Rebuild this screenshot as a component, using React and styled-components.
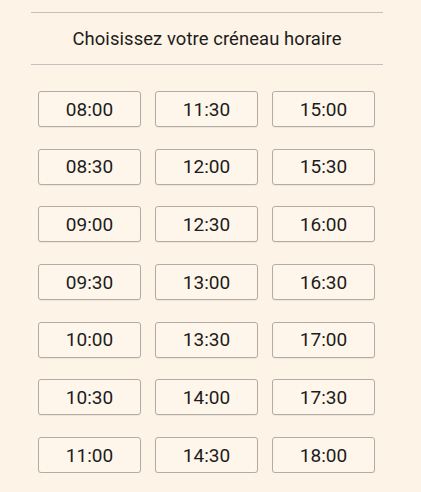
import styled, { createGlobalStyle } from "styled-components";

const GlobalStyle = createGlobalStyle`
  html, body {
    margin: 0;
    background: #fdf3e6;
    font-family: Roboto, "Liberation Sans", sans-serif;
    color: #1c1c1c;
  }
`;

const Wrapper = styled.div`
  width: 352px;
  margin-left: 31px;
  padding-top: 12px;
`;

const Title = styled.h2`
  margin: 0;
  border-top: 1px solid #c3c1bd;
  border-bottom: 1px solid #c3c1bd;
  height: 51px;
  display: flex;
  align-items: center;
  justify-content: center;
  font-size: 18.4px;
  font-weight: 400;
  letter-spacing: 0.1px;
`;

const SlotGrid = styled.div`
  display: grid;
  grid-template-columns: repeat(3, 103px);
  column-gap: 14px;
  row-gap: 21.7px;
  padding: 26px 7px 0;
`;

const Slot = styled.button`
  height: 36px;
  background: #fff6eb;
  border: 1px solid #b3aca6;
  border-radius: 3px;
  box-shadow: 0 1px 1px rgba(0, 0, 0, 0.06);
  font-family: Roboto, "Liberation Sans", sans-serif;
  font-size: 19px;
  color: #1c1c1c;
  padding: 0;
  cursor: pointer;
`;

const rows = [
  ["08:00", "11:30", "15:00"],
  ["08:30", "12:00", "15:30"],
  ["09:00", "12:30", "16:00"],
  ["09:30", "13:00", "16:30"],
  ["10:00", "13:30", "17:00"],
  ["10:30", "14:00", "17:30"],
  ["11:00", "14:30", "18:00"],
];

export default function App() {
  return (
    <>
      <GlobalStyle />
      <Wrapper>
        <Title>Choisissez votre créneau horaire</Title>
        <SlotGrid>
          {rows.flat().map((t) => (
            <Slot key={t}>{t}</Slot>
          ))}
        </SlotGrid>
      </Wrapper>
    </>
  );
}
